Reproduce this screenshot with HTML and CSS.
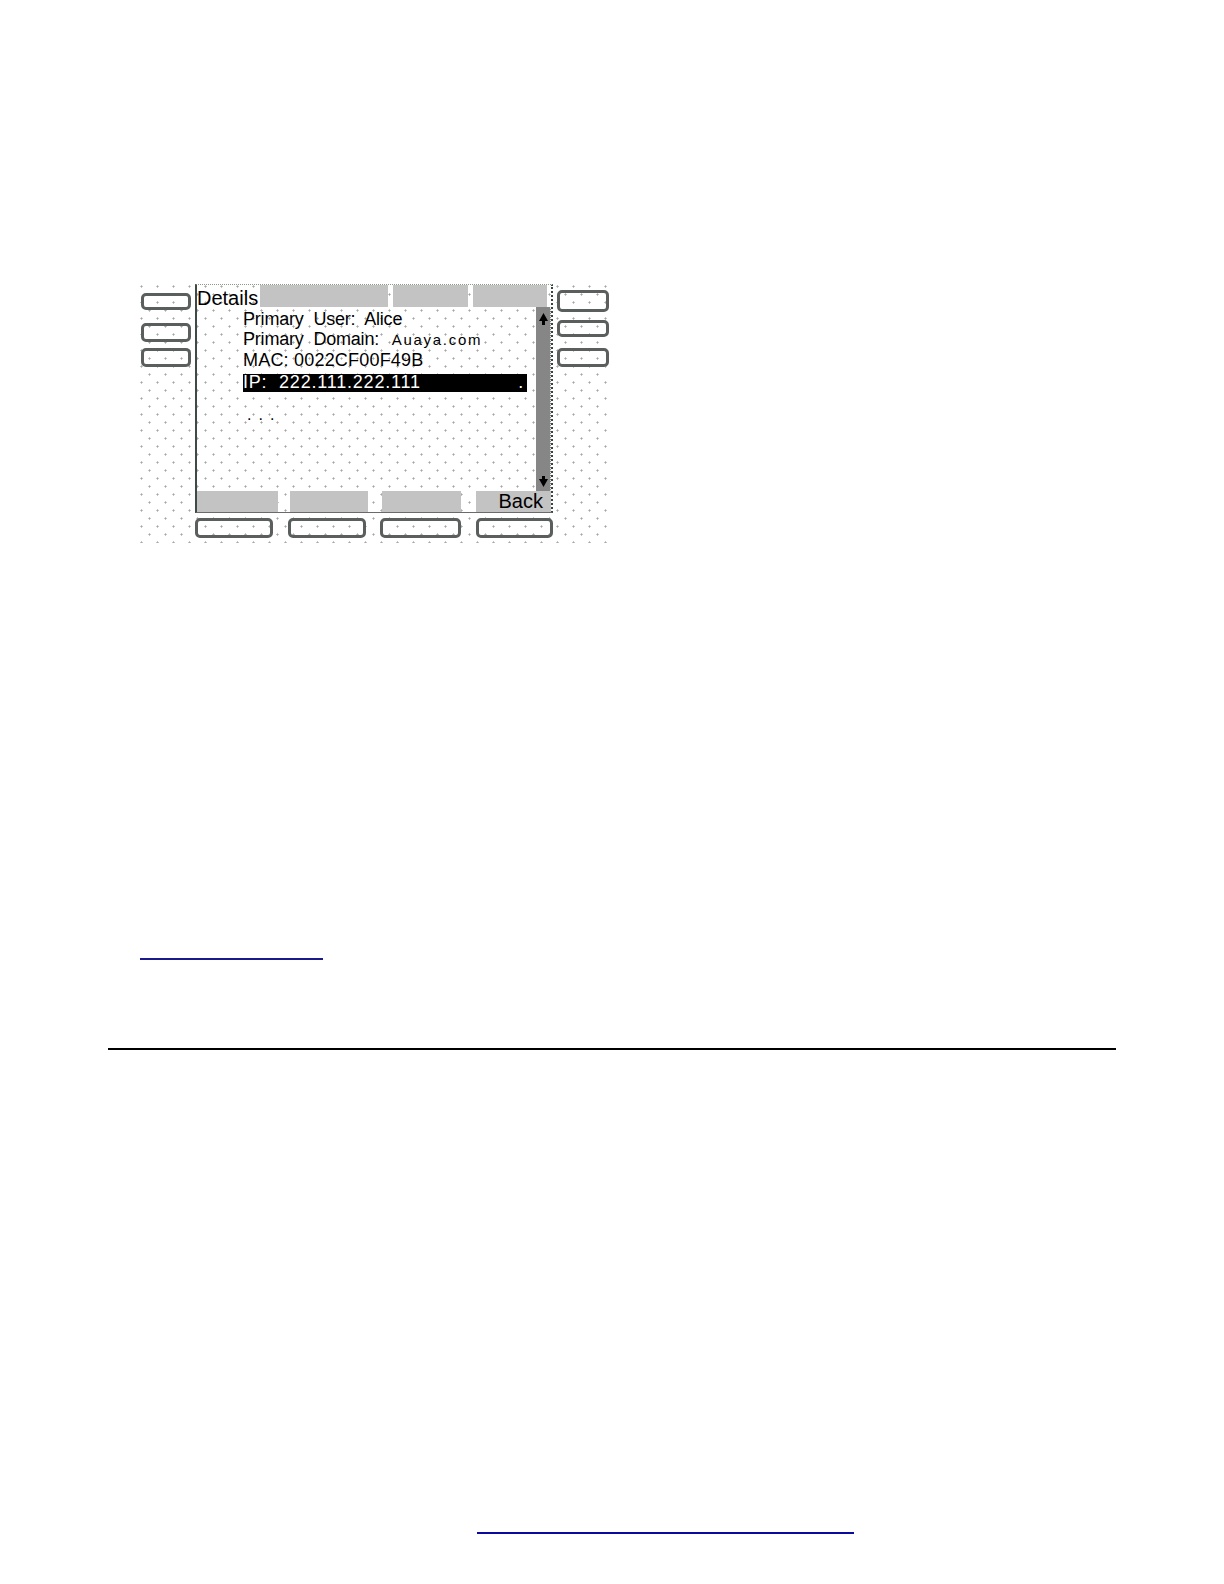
FILE: index.html
```html
<!DOCTYPE html>
<html lang="en">
<head>
<meta charset="utf-8">
<title>Details</title>
<link rel="stylesheet" href="styles.css">
</head>
<body>
<div class="page">
  <div class="phone">
    <div class="side side-left">
      <div class="key kl1"></div>
      <div class="key kl2"></div>
      <div class="key kl3"></div>
    </div>
    <div class="screen">
      <div class="titlebar">
        <div class="title-label">Details</div>
        <div class="tab tab1"></div>
        <div class="tab tab2"></div>
        <div class="tab tab3"></div>
      </div>
      <div class="body">
        <div class="list">
          <div class="row">Primary User: Alice</div>
          <div class="row">Primary Domain: <span class="domain">Auaya.com</span></div>
          <div class="row mac">MAC: 0022CF00F49B</div>
          <div class="row sel"><span>IP:&nbsp; 222.111.222.111</span><span>.</span></div>
          <div class="row more">...</div>
        </div>
        <div class="scroll">
          <svg class="arrow" width="9" height="12" viewBox="0 0 9 12"><path d="M4.5 0 L9 8 L6 8 L6 12 L3 12 L3 8 L0 8 Z" fill="#000"/></svg>
          <svg class="arrow" width="9" height="11" viewBox="0 0 9 11"><path d="M3 0 L6 0 L6 3 L9 3 L4.5 11 L0 3 L3 3 Z" fill="#000"/></svg>
        </div>
      </div>
      <div class="softkeys">
        <div class="soft s1"></div>
        <div class="soft s2"></div>
        <div class="soft s3"></div>
        <div class="soft s4">Back</div>
      </div>
    </div>
    <div class="side side-right">
      <div class="key kr1"></div>
      <div class="key kr2"></div>
      <div class="key kr3"></div>
    </div>
    <div class="bottom-keys">
      <div class="key kb1"></div>
      <div class="key kb2"></div>
      <div class="key kb3"></div>
      <div class="key kb4"></div>
    </div>
  </div>

  <a class="link-line link-top" href="#"></a>
  <div class="rule"></div>
  <a class="link-line link-footer" href="#"></a>
</div>
</body>
</html>
```

FILE: styles.css
```css
html, body {
  margin: 0;
  padding: 0;
  background: #ffffff;
}

body {
  font-family: "Liberation Sans", Arial, sans-serif;
  color: #000;
}

.page {
  width: 1224px;
  min-height: 1584px;
  padding-top: 282px;
  box-sizing: border-box;
}

/* ---------- phone figure ---------- */
.phone {
  margin-left: 139px;
  width: 472px;
  box-sizing: border-box;
  padding: 2px 1px 5px 2px;
  display: grid;
  grid-template-columns: 50px 358px 52px;
  grid-template-rows: 229px 20px;
  column-gap: 4px;
  row-gap: 5px;
  background-color: #fff;
  background-image:
    radial-gradient(circle at 2.5px 4.5px, #a8a8a8 0.8px, rgba(168,168,168,0) 1.4px),
    radial-gradient(circle at 10.5px 12.5px, #a8a8a8 0.8px, rgba(168,168,168,0) 1.4px);
  background-size: 16px 16px;
}

.key {
  box-sizing: border-box;
  border: 3px solid #5a5f5d;
  border-radius: 5px;
}

.side {
  display: flex;
  flex-direction: column;
}

.kl1 { margin-top: 9px; height: 17px; }
.kl2 { margin-top: 13px; height: 19px; }
.kl3 { margin-top: 6px; height: 19px; }

.kr1 { margin-top: 6px; height: 22px; }
.kr2 { margin-top: 8px; height: 17px; }
.kr3 { margin-top: 11px; height: 19px; }

.bottom-keys {
  grid-column: 2;
  display: flex;
  justify-content: space-between;
}
.kb1 { width: 78px; }
.kb2 { width: 78px; }
.kb3 { width: 81px; }
.kb4 { width: 77px; }

/* ---------- screen ---------- */
.screen {
  box-sizing: border-box;
  border-left: 2px solid #3f4a47;
  border-right: 2px dotted #34463f;
  border-top: 1px dotted #8e9a86;
  border-bottom: 1px solid #6a6a6a;
  display: flex;
  flex-direction: column;
}

.titlebar {
  height: 22px;
  display: flex;
  flex-shrink: 0;
}

.title-label {
  width: 63px;
  box-sizing: border-box;
  padding-top: 3px;
  height: 22px;
  font-size: 20px;
  line-height: 20px;
  white-space: nowrap;
}

.tab {
  background: #c3c3c3;
  height: 22px;
}
.tab1 { width: 128px; }
.tab2 { width: 75px; margin-left: 5px; }
.tab3 { width: 74px; margin-left: 5px; }

.body {
  flex: 1;
  display: flex;
}

.list {
  flex: 1;
  padding-left: 46px;
  padding-top: 1.5px;
  padding-right: 9px;
}

.row {
  height: 20.5px;
  font-size: 18px;
  line-height: 20.5px;
  white-space: nowrap;
  word-spacing: 5px;
  letter-spacing: -0.2px;
}

.domain {
  font-size: 15px;
  letter-spacing: 1.7px;
  word-spacing: 0;
  margin-left: 3px;
}

.mac {
  letter-spacing: 0.2px;
  word-spacing: 0;
}

.sel {
  margin-top: 4px;
  height: 18px;
  line-height: 17px;
  font-size: 18px;
  background: #000;
  color: #fff;
  display: flex;
  justify-content: space-between;
  padding-right: 3px;
  letter-spacing: 0.8px;
  word-spacing: 0;
}

.more {
  margin-top: 13px;
  padding-left: 4px;
  font-size: 16px;
  line-height: 20px;
  letter-spacing: 7px;
}

.scroll {
  width: 14px;
  background: #868686;
  border-right: 1px dotted #e8e8e8;
  display: flex;
  flex-direction: column;
  justify-content: space-between;
  align-items: center;
  padding: 6px 0 4px;
}

.arrow {
  display: block;
}

.softkeys {
  height: 21px;
  display: flex;
  flex-shrink: 0;
}

.soft {
  background: #c3c3c3;
  height: 21px;
}
.s1 { width: 81px; }
.s2 { width: 78px; margin-left: 12px; }
.s3 { width: 79px; margin-left: 14px; }
.s4 {
  width: 75px;
  margin-left: 15px;
  box-sizing: border-box;
  text-align: right;
  padding-right: 8px;
  font-size: 20px;
  line-height: 21px;
}

/* ---------- page lines ---------- */
.link-line {
  display: block;
  height: 0;
}

.link-top {
  margin-top: 415px;
  margin-left: 140px;
  width: 183px;
  border-bottom: 2px solid #1a1a8c;
}

.rule {
  margin-top: 88px;
  margin-left: 108px;
  width: 1008px;
  border-top: 2px solid #000;
}

.link-footer {
  margin-top: 482px;
  margin-left: 477px;
  width: 377px;
  border-bottom: 2px solid #0a0aa0;
}
```
